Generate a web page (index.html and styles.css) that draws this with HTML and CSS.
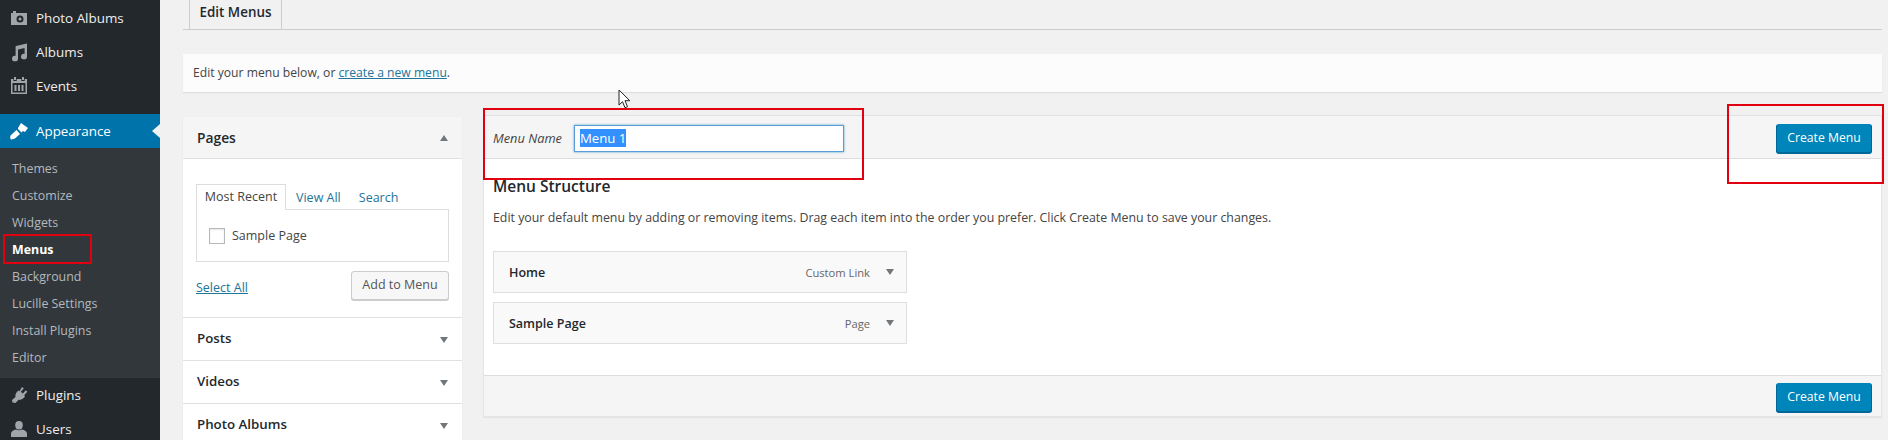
FILE: index.html
```html
<!doctype html>
<html>
<head>
<meta charset="utf-8">
<title>Menus</title>
<link rel="stylesheet" href="styles.css">
</head>
<body>
<div class="wrap">
	<div class="side">
		<ul class="nav nav-top">
			<li>
				<svg viewBox="0 0 20 20"><path d="M2 5h2V3h3v2h11v12H2zM11 7.500a3.500 3.500 0 1 0 0 7a3.500 3.500 0 0 0 0-7zM11 9.500a1.500 1.500 0 1 1 0 3a1.500 1.500 0 0 1 0-3z"/></svg>
				Photo Albums
			</li>
			<li>
				<svg viewBox="0 0 20 20"><path d="M7 4l11-2.500V14.500a3 2.800 0 1 1-2.400-2.700V6L9 7.500V16.500a3 2.800 0 1 1-2.400-2.700V4z"/></svg>
				Albums
			</li>
			<li>
				<svg viewBox="0 0 20 20"><path d="M5 1h2v3H5zM13 1h2v3h-2zM2 3h2.300v2h3.400V3h4.600v2h3.400V3H18v15H2zM3.500 7v9.500h13V7zM5.500 9h2v6h-2zM9 9h2v6H9zM12.500 9h2v6h-2z" fill-rule="evenodd"/></svg>
				Events
			</li>
		</ul>
		<div class="nav-on">
			<svg viewBox="0 0 20 20"><path d="M9 7l3-5 7 5-3 4-2-1-1.500 1.500L9 8zM7.500 9L11 13l-4.500 4c-1.500 1.200-4.500 1.500-4.500 1.500s-1.500-1.500-.5-4z"/></svg>
			Appearance
			<span class="nav-arrow"></span>
		</div>
		<ul class="sub">
			<li>Themes</li>
			<li>Customize</li>
			<li>Widgets</li>
			<li class="cur">Menus</li>
			<li>Background</li>
			<li>Lucille Settings</li>
			<li>Install Plugins</li>
			<li>Editor</li>
		</ul>
		<ul class="nav nav-bottom">
			<li>
				<svg viewBox="0 0 20 20"><path d="M13 2l1.800 1.500-3 3.300 2 1.700 3-3.200 1.500 1.500-3.200 3.500 1 1c-1.500 2.500-4 4-6.500 3.500L6.500 18l-3-.5L3 15l3.500-3c-.5-2.500.5-5 3.300-6.500l.8.800z"/></svg>
				Plugins
			</li>
			<li>
				<svg viewBox="0 0 20 20"><path d="M10 2a3.800 4.200 0 1 0 0 8.400a3.800 4.200 0 0 0 0-8.400zM2 18v-3.500c0-2 2.500-3.500 5-4 1.500 1 4.500 1 6 0 2.500.5 5 2 5 4V18z"/></svg>
				Users
			</li>
		</ul>
	</div>

	<div class="main">
		<div class="tabs"><span class="tab">Edit Menus</span></div>
		<div class="notice">Edit your menu below, or <a href="#">create a new menu</a>.</div>

		<div class="cols">
			<div class="left">
				<div class="box-head box-open">Pages<span class="up"></span></div>
				<div class="pages-body">
					<div class="small-tabs">
						<span class="small-tab">Most Recent</span>
						<a class="small-link" href="#">View All</a>
						<a class="small-link" href="#">Search</a>
					</div>
					<div class="check-box">
						<span class="check"></span>
						Sample Page
					</div>
					<div class="pages-foot">
						<a href="#">Select All</a>
						<span class="btn">Add to Menu</span>
					</div>
				</div>
				<div class="box-head">Posts<span class="down"></span></div>
				<div class="box-head">Videos<span class="down"></span></div>
				<div class="box-head">Photo Albums<span class="down"></span></div>
			</div>

			<div class="panel">
				<div class="panel-head">
					<label>Menu Name</label>
					<div class="name-input"><span class="picked">Menu 1</span></div>
					<span class="btn-blue">Create Menu</span>
				</div>
				<div class="panel-body">
					<h3>Menu Structure</h3>
					<p>Edit your default menu by adding or removing items. Drag each item into the order you prefer. Click Create Menu to save your changes.</p>
					<div class="item"><b>Home</b><span>Custom Link</span><i class="down"></i></div>
					<div class="item"><b>Sample Page</b><span>Page</span><i class="down"></i></div>
				</div>
				<div class="panel-foot"><span class="btn-blue">Create Menu</span></div>
			</div>
		</div>
	</div>
</div>

<div class="mark mark-menus"></div>
<div class="mark mark-name"></div>
<div class="mark mark-create"></div>
<svg class="cursor" viewBox="0 0 13 20"><path d="M1 1v15l3.500-3.300 2.500 6 2.500-1-2.500-6h4.800z" fill="#fff" stroke="#222" stroke-width="1"/></svg>
</body>
</html>
```
FILE: styles.css
```css
*{margin:0;padding:0;box-sizing:border-box;list-style:none;}
html,body{height:440px;overflow:hidden;}
body{background:#f1f1f1;font-family:"Open Sans","Noto Sans",sans-serif;font-size:13px;color:#444;}
a{color:#21759b;}

.wrap{display:flex;height:440px;}

.side{width:160px;flex:none;background:#23282d;padding-top:1px;color:#eee;font-size:13.4px;}
.nav li{display:flex;align-items:center;height:34px;padding-left:9px;gap:7px;}
.nav svg{width:20px;height:20px;fill:#a0a5aa;flex:none;}
.nav-top{padding-bottom:11px;}
.nav-on{position:relative;display:flex;align-items:center;height:34px;padding-left:9px;gap:7px;background:#0073aa;color:#fff;}
.nav-on svg{width:20px;height:20px;fill:#fff;flex:none;}
.nav-arrow{position:absolute;right:0;top:10px;border:7px solid transparent;border-left:0;border-right:8px solid #f1f1f1;}
.sub{background:#32373c;height:230px;padding-top:7px;color:#b4b9be;font-size:12.4px;}
.sub li{height:27px;line-height:27px;padding-left:12px;}
.sub .cur{color:#fff;font-weight:700;}

.main{flex:1;padding:0 6px 0 23px;}
.tabs{height:30px;border-bottom:1px solid #ccc;padding-left:6px;}
.tab{display:inline-block;width:93px;height:30px;border:1px solid #ccc;border-top:0;background:#f1f1f1;text-align:center;line-height:24px;font-size:13.4px;font-weight:600;color:#23282d;}
.notice{height:38px;margin-top:24px;background:#fcfcfc;box-shadow:0 1px 1px rgba(0,0,0,.08);padding-left:10px;line-height:37px;font-size:12.15px;color:#444;}

.cols{display:flex;gap:21px;margin-top:24px;align-items:flex-start;}
.left{width:279px;flex:none;margin-top:1px;background:#fff;box-shadow:0 1px 1px rgba(0,0,0,.1);}
.box-head{position:relative;height:43px;border-top:1px solid #e1e1e1;padding-left:14px;line-height:41px;font-weight:600;color:#23282d;font-size:13.3px;}
.box-head:first-child{border-top:0;height:42px;}
.box-open{background:#f5f5f5;border-bottom:1px solid #e1e1e1;font-size:13.8px;}
.up,.down{position:absolute;right:14px;top:19px;border:4.500px solid transparent;}
.up{top:18px;border-top:0;border-bottom:6px solid #72777c;}
.down{border-bottom:0;border-top:6px solid #72777c;}

.pages-body{height:158px;padding:25px 13px 0;}
.small-tabs{display:flex;align-items:center;height:26px;font-size:12.5px;}
.small-tab{width:90px;height:26px;line-height:24px;text-align:center;border:1px solid #ddd;border-bottom:0;background:#fff;position:relative;z-index:1;}
.small-link{margin-left:10px;text-decoration:none;margin-right:18px;}
.small-link + .small-link{margin-left:0;}
.check-box{display:flex;align-items:center;gap:7px;height:53px;margin-top:-1px;border:1px solid #ddd;padding:0 12px 0 12px;font-size:12.5px;}
.check{width:16px;height:16px;border:1px solid #b4b9be;box-shadow:inset 0 1px 2px rgba(0,0,0,.1);}
.pages-foot{display:flex;justify-content:space-between;align-items:center;margin-top:9px;font-size:12.5px;}
.pages-foot a{margin-top:3px;}
.btn{width:98px;height:29px;line-height:26px;text-align:center;background:#f7f7f7;border:1px solid #ccc;border-radius:3px;box-shadow:0 1px 0 #ccc;color:#555;}

.panel{width:1399px;flex:none;background:#fff;border:1px solid #e5e5e5;border-top:1px solid #e1e1e1;box-shadow:0 1px 1px rgba(0,0,0,.05);margin-top:-1px;}
.panel-head{display:flex;align-items:center;height:43px;background:#f5f5f5;border-bottom:1px solid #ddd;padding:2px 9px 0;}
.panel-head label{font-style:italic;font-size:12.8px;color:#444;width:81px;}
.name-input{width:270px;height:27px;background:#fff;border:1px solid #5b9dd9;box-shadow:0 0 2px rgba(30,140,190,.8);padding:3px 5px;font-size:13.2px;line-height:18px;color:#fff;white-space:nowrap;}
.picked{display:inline-block;background:#3390ff;}
.panel-head .btn-blue{margin-left:auto;}
.btn-blue{display:inline-block;width:96px;height:29px;line-height:26px;text-align:center;background:#0085ba;border:1px solid #006799;border-top-color:#0085ba;border-bottom-color:#006799;border-radius:3px;box-shadow:0 1px 0 #006799;color:#fff;font-size:12.2px;}

.panel-body{height:216px;padding:17px 9px 0;}
.panel-body h3{font-size:15.5px;font-weight:600;color:#23282d;line-height:20px;}
.panel-body p{font-size:12.36px;margin-top:13px;line-height:18px;color:#444;}
.item{position:relative;display:flex;align-items:center;width:414px;height:42px;background:#f9f9f9;border:1px solid #dfdfdf;padding:0 36px 0 15px;font-size:12.5px;margin-bottom:9px;}
p + .item{margin-top:24px;}
.item b{font-weight:600;color:#23282d;}
.item span{margin-left:auto;color:#666;font-size:11.2px;}
.item .down{right:12px;top:17px;}

.panel-foot{display:flex;justify-content:flex-end;align-items:center;height:41px;background:#f5f5f5;border-top:1px solid #ddd;padding:2px 9px 0 0;}

.mark{position:absolute;border:2px solid #e0000f;}
.mark-menus{left:3px;top:234px;width:89px;height:30px;}
.mark-name{left:483px;top:108px;width:381px;height:72px;}
.mark-create{left:1727px;top:104px;width:157px;height:80px;}
.cursor{position:absolute;left:618px;top:89px;width:13px;height:20px;}
```
